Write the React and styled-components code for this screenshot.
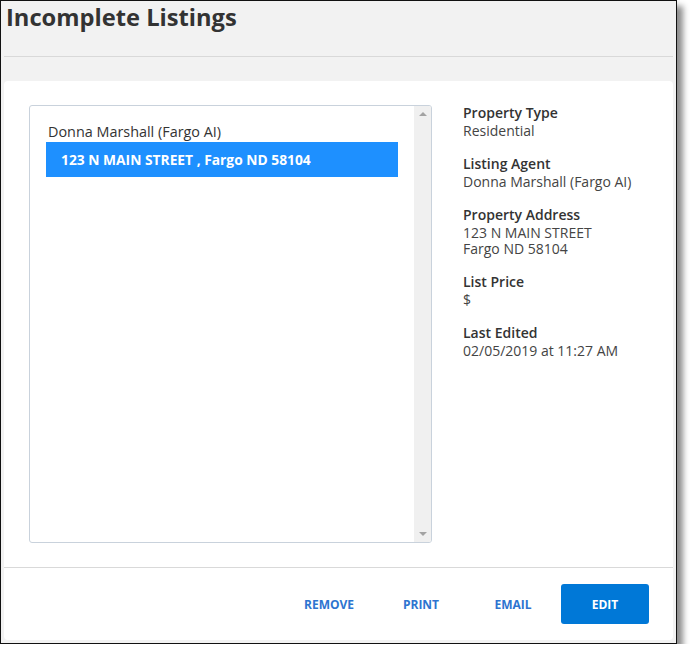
import styled, { createGlobalStyle } from "styled-components"

const GlobalStyle = createGlobalStyle`
  html, body {
    margin: 0;
    padding: 0;
    background: #ffffff;
  }
  body {
    font-family: "Open Sans", "Liberation Sans", sans-serif;
    color: #333;
  }
`

const Frame = styled.div`
  width: 677px;
  height: 644px;
  box-sizing: border-box;
  border: 1px solid #111;
  background: #f2f2f2;
  box-shadow: 6px 6px 6px rgba(0, 0, 0, 0.45);
  display: flex;
  flex-direction: column;
  padding: 0 3px 3px 3px;
`

const Header = styled.div`
  height: 56px;
  border-bottom: 1px solid #d9d9d9;
  box-sizing: border-box;
  padding: 1px 0 0 2px;
`

const Title = styled.h1`
  margin: 0;
  font-size: 23.7px;
  line-height: 30px;
  font-weight: 700;
  color: #333;
`

const Card = styled.div`
  margin-top: 24px;
  flex: 1;
  background: #fff;
  border-radius: 4px;
  display: flex;
  flex-direction: column;
`

const Body = styled.div`
  display: flex;
  padding: 24px 24px 24px 25px;
  gap: 32px;
  border-bottom: 1px solid #d9d9d9;
`

const ListBox = styled.div`
  width: 403px;
  height: 438px;
  box-sizing: border-box;
  border: 1px solid #c9d2dc;
  border-radius: 3px;
  display: flex;
  overflow: hidden;
`

const ListContent = styled.div`
  flex: 1;
  padding: 16px 16px 0 16px;
`

const GroupLabel = styled.div`
  font-size: 14.4px;
  line-height: 20px;
  color: #333;
  padding-left: 2px;
`

const Option = styled.div`
  height: 35px;
  display: flex;
  align-items: center;
  padding-left: 15px;
  font-size: 13.8px;
  font-weight: 700;
  color: ${(props) => (props.selected ? "#fff" : "#333")};
  background: ${(props) => (props.selected ? "#1e90ff" : "transparent")};
`

const ScrollBar = styled.div`
  width: 17px;
  background: #f0f0f0;
  display: flex;
  flex-direction: column;
  justify-content: space-between;
  align-items: center;
  padding: 6px 0;
`

const Arrow = styled.div`
  width: 0;
  height: 0;
  border-left: 4px solid transparent;
  border-right: 4px solid transparent;
  ${(props) =>
    props.down
      ? "border-top: 4px solid #a3a3a3;"
      : "border-bottom: 4px solid #a3a3a3;"}
`

const Details = styled.div`
  display: flex;
  flex-direction: column;
  gap: 16px;
  margin: -1px 0 0 -1px;
`

const Field = styled.div`
  font-size: 14px;
`

const FieldLabel = styled.div`
  font-weight: 600;
  line-height: 18px;
  color: #333;
  margin-bottom: 1px;
`

const FieldValue = styled.div`
  line-height: 16px;
  color: #444;
`

const Footer = styled.div`
  flex: 1;
  display: flex;
  justify-content: flex-end;
  align-items: center;
  gap: 4px;
  padding-right: 24px;
`

const Button = styled.button`
  width: 88px;
  height: 40px;
  border: none;
  border-radius: 3px;
  font-family: "Open Sans", "Liberation Sans", sans-serif;
  font-size: 12px;
  font-weight: 700;
  cursor: pointer;
  background: ${(props) => (props.primary ? "#0078d7" : "transparent")};
  color: ${(props) => (props.primary ? "#fff" : "#2d74d0")};
`

const details = [
  { label: "Property Type", value: ["Residential"] },
  { label: "Listing Agent", value: ["Donna Marshall (Fargo AI)"] },
  { label: "Property Address", value: ["123 N MAIN STREET", "Fargo ND 58104"] },
  { label: "List Price", value: ["$"] },
  { label: "Last Edited", value: ["02/05/2019 at 11:27 AM"] }
]

const App = () => {
  return (
    <>
      <GlobalStyle />
      <Frame>
        <Header>
          <Title>Incomplete Listings</Title>
        </Header>
        <Card>
          <Body>
            <ListBox>
              <ListContent>
                <GroupLabel>Donna Marshall (Fargo AI)</GroupLabel>
                <Option selected>123 N MAIN STREET , Fargo ND 58104</Option>
              </ListContent>
              <ScrollBar>
                <Arrow />
                <Arrow down />
              </ScrollBar>
            </ListBox>
            <Details>
              {details.map((d) => (
                <Field key={d.label}>
                  <FieldLabel>{d.label}</FieldLabel>
                  {d.value.map((v) => (
                    <FieldValue key={v}>{v}</FieldValue>
                  ))}
                </Field>
              ))}
            </Details>
          </Body>
          <Footer>
            <Button>REMOVE</Button>
            <Button>PRINT</Button>
            <Button>EMAIL</Button>
            <Button primary>EDIT</Button>
          </Footer>
        </Card>
      </Frame>
    </>
  )
}

export default App
